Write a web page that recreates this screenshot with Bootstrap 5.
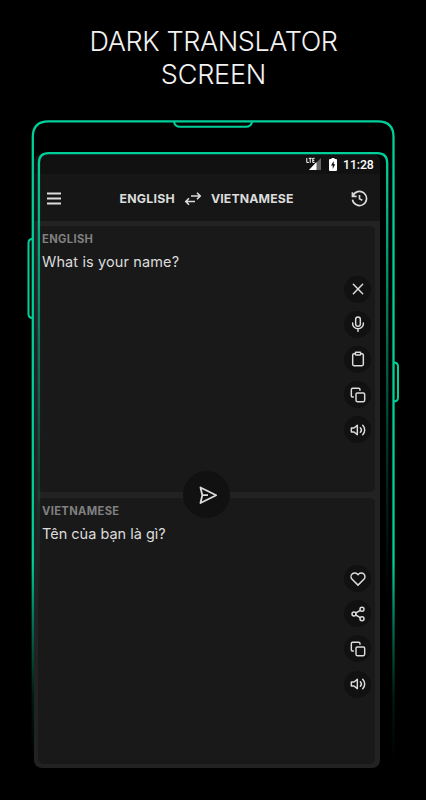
<!DOCTYPE html>
<html lang="en">
<head>
<meta charset="utf-8">
<meta name="viewport" content="width=device-width, initial-scale=1">
<title>Dark Translator</title>
<link href="https://cdn.jsdelivr.net/npm/bootstrap@5.3.0/dist/css/bootstrap.min.css" rel="stylesheet">
<style>
body{background:#000;color:#dcdcdc;font-family:Inter,"Noto Sans",sans-serif;height:800px;overflow:hidden}
.headline{font-size:27px;line-height:33px;font-weight:300;color:#f2f2f2;height:154px;padding-top:25px;padding-left:1px;letter-spacing:-.4px}
.headline span{letter-spacing:-.2px}
.screen{width:346px;height:614px;margin-left:34px;background:#222;border-radius:8px}
.status{height:20px;background:#111;padding-right:7px;font:500 12.3px/20px Roboto,sans-serif;color:#fff}
.status span{width:30px;white-space:nowrap;letter-spacing:-.1px;padding-top:1px}
.toolbar{height:47px;background:#161616;padding:2px 12px 0 12px}
.lang{font-size:12.3px;font-weight:700;line-height:16px;letter-spacing:.25px}
.lang span:last-child{letter-spacing:.12px}
.panes{padding:5px 5px 4px 4px;gap:6px;height:547px}
.pane{background:#191919;border-radius:5px;padding:5px 4px 0;flex:1 1 0}
.pane h2{font-size:11.2px;line-height:16px;font-weight:700;color:#808080;letter-spacing:.35px}
.pane p{font-size:14.5px;line-height:20px;margin-top:5px}
.pane p.src{letter-spacing:.12px}
.tools{gap:8.2px}
.t1{margin-top:3.5px}.t2{margin-top:21px}
.rnd{width:27px;height:27px;background:#111;color:#dcdcdc}
.fab{left:149px;top:250px;width:47px;height:47px;background:#111;color:#dcdcdc;z-index:2}
.ic{width:16px;height:16px;fill:none;stroke:currentColor;stroke-width:2.2;stroke-linecap:round;stroke-linejoin:round}
.batt{margin-right:6px}
</style>
<script src="https://cdn.jsdelivr.net/npm/bootstrap@5.3.0/dist/js/bootstrap.bundle.min.js"></script>
</head>
<body class="position-relative">
<svg class="d-none">
<symbol id="copy" viewBox="0 0 24 24"><rect x="9" y="9" width="13" height="13" rx="2"/><path d="M5 15H4a2 2 0 0 1-2-2V4a2 2 0 0 1 2-2h9a2 2 0 0 1 2 2v1"/></symbol>
<symbol id="vol" viewBox="0 0 24 24"><path d="M11 5 6 9H2v6h4l5 4zM19.1 4.9a10 10 0 0 1 0 14.2M15.5 8.5a5 5 0 0 1 0 7"/></symbol>
</svg>
<h1 class="headline text-center m-0">DARK TRANSLATOR<br><span>SCREEN</span></h1>
<main class="screen overflow-hidden">
  <div class="status d-flex justify-content-end align-items-center">
    <svg width="15" height="14" viewBox="0 0 15 14"><path d="M15 1v12H3z" fill="#666"/><path d="M10.5 5v8H3z" fill="#fff"/><path d="M.8 1v4.500h2M2.700 1.300h3M4.200 1.300v4.500M6.800 1v4.500h1.800M6.800 1.300h1.800M6.800 3.400h1.500" stroke="#fff" fill="none"/></svg>
    <svg class="ms-2 batt" width="8" height="13" viewBox="0 0 8 13"><path d="M2.500 0h3v1H7q1 0 1 1v10q0 1-1 1H1q-1 0-1-1V2q0-1 1-1h1.500z" fill="#fff"/><path d="M4.700 3 2 7.500h1.700V11L6.200 6.300H4.700z" fill="#111"/></svg>
    <span>11:28</span>
  </div>
  <nav class="toolbar d-flex align-items-center justify-content-between">
    <svg width="16" height="14" viewBox="0 0 16 14" stroke="#dcdcdc" stroke-width="1.800"><path d="M1 1.500h14M1 6.500h14M1 11.500h14"/></svg>
    <div class="d-flex align-items-center lang">
      <span>ENGLISH</span>
      <svg class="mx-2" width="20" height="16" viewBox="0 0 20 16" fill="none" stroke="#dcdcdc" stroke-width="1.600"><path d="M8 5h9M14 1.800 17.200 5 14 8.200M12 10.500H3M6 7.300 2.800 10.500 6 13.700"/></svg>
      <span>VIETNAMESE</span>
    </div>
    <svg width="17" height="17" viewBox="0 0 24 24" fill="none" stroke="#dcdcdc" stroke-width="2.300"><path d="M12 7v5.500l4 2M2.600 8.500a10 10 0 1 1-.5 5M2 3v6h6"/></svg>
  </nav>
  <div class="panes d-flex flex-column position-relative">
    <section class="pane w-100">
      <h2 class="m-0">ENGLISH</h2>
      <p class="src mb-0">What is your name?</p>
      <div class="tools t1 d-flex flex-column align-items-end">
        <button class="rnd btn p-0 border-0 rounded-circle d-flex align-items-center justify-content-center" aria-label="Clear"><svg class="ic" viewBox="0 0 24 24"><path d="m5 5 14 14M19 5 5 19"/></svg></button>
        <button class="rnd btn p-0 border-0 rounded-circle d-flex align-items-center justify-content-center" aria-label="Speak"><svg class="ic" viewBox="0 0 24 24"><rect x="8.500" y="1.500" width="7" height="14" rx="3.500"/><path d="M4 10.500v1.500a8 7 0 0 0 16 0v-1.500M12 19v4"/></svg></button>
        <button class="rnd btn p-0 border-0 rounded-circle d-flex align-items-center justify-content-center" aria-label="Paste"><svg class="ic" viewBox="0 0 24 24"><path d="M16 4h2a2 2 0 0 1 2 2v14a2 2 0 0 1-2 2H6a2 2 0 0 1-2-2V6a2 2 0 0 1 2-2h2"/><rect x="8" y="2" width="8" height="4" rx="1"/></svg></button>
        <button class="rnd btn p-0 border-0 rounded-circle d-flex align-items-center justify-content-center" aria-label="Copy"><svg class="ic"><use href="#copy"/></svg></button>
        <button class="rnd btn p-0 border-0 rounded-circle d-flex align-items-center justify-content-center" aria-label="Listen"><svg class="ic"><use href="#vol"/></svg></button>
      </div>
    </section>
    <button class="fab btn p-0 border-0 rounded-circle position-absolute d-flex align-items-center justify-content-center" aria-label="Translate"><svg width="20" height="20" viewBox="0 0 20 20" fill="none" stroke="#dcdcdc" stroke-width="1.800" stroke-linejoin="round"><path d="M3.500 2.500 19.200 10.200 3.500 18l1.800-7.800zM5.300 10.200H11"/></svg></button>
    <section class="pane w-100">
      <h2 class="m-0">VIETNAMESE</h2>
      <p class="mb-0">Tên của bạn là gì?</p>
      <div class="tools t2 d-flex flex-column align-items-end">
        <button class="rnd btn p-0 border-0 rounded-circle d-flex align-items-center justify-content-center" aria-label="Favourite"><svg class="ic" viewBox="0 0 24 24"><path d="M20.800 4.600a5.500 5.500 0 0 0-7.800 0L12 5.700l-1-1.100a5.500 5.500 0 0 0-7.800 7.800L12 21.200l8.800-8.800a5.500 5.500 0 0 0 0-7.800z"/></svg></button>
        <button class="rnd btn p-0 border-0 rounded-circle d-flex align-items-center justify-content-center" aria-label="Share"><svg class="ic" viewBox="0 0 24 24"><circle cx="18" cy="5" r="3"/><circle cx="6" cy="12" r="3"/><circle cx="18" cy="19" r="3"/><path d="m8.600 13.500 6.800 4M15.400 6.500l-6.800 4"/></svg></button>
        <button class="rnd btn p-0 border-0 rounded-circle d-flex align-items-center justify-content-center" aria-label="Copy"><svg class="ic"><use href="#copy"/></svg></button>
        <button class="rnd btn p-0 border-0 rounded-circle d-flex align-items-center justify-content-center" aria-label="Listen"><svg class="ic"><use href="#vol"/></svg></button>
      </div>
    </section>
  </div>
</main>
<!-- phone outline laid over the screen -->
<svg class="position-absolute top-0 start-0 pe-none" width="426" height="800" fill="none" stroke-width="2.300">
  <defs>
    <linearGradient id="go" gradientUnits="userSpaceOnUse" x1="0" y1="120" x2="0" y2="760"><stop offset=".69" stop-color="#00cf9a"/><stop offset=".8" stop-color="#00cf9a" stop-opacity=".5"/><stop offset=".9" stop-color="#00cf9a" stop-opacity=".13"/><stop offset="1" stop-color="#00cf9a" stop-opacity="0"/></linearGradient>
    <linearGradient id="gi" gradientUnits="userSpaceOnUse" x1="0" y1="150" x2="0" y2="600"><stop offset=".03" stop-color="#00cf9a"/><stop offset=".4" stop-color="#00cf9a" stop-opacity=".55"/><stop offset=".75" stop-color="#00cf9a" stop-opacity=".17"/><stop offset="1" stop-color="#00cf9a" stop-opacity="0"/></linearGradient>
  </defs>
  <path d="M32.800 760V137q0-15.700 15.700-15.700H378q15.500 0 15.500 15.700v623" stroke="url(#go)"/>
  <path d="M38.900 600V163q0-9.800 9.800-9.800h328.500q10 0 10 9.800v437" stroke="url(#gi)"/>
  <path d="M174 122q1 4.700 6 4.700h66q5 0 6-4.700M32.500 239q-4 0-4 4v71q0 4 4 4M393.500 362.500q4.500 0 4.500 4v31q0 4-4.500 4" stroke="#00cf9a" stroke-width="2"/>
</svg>
</body>
</html>
